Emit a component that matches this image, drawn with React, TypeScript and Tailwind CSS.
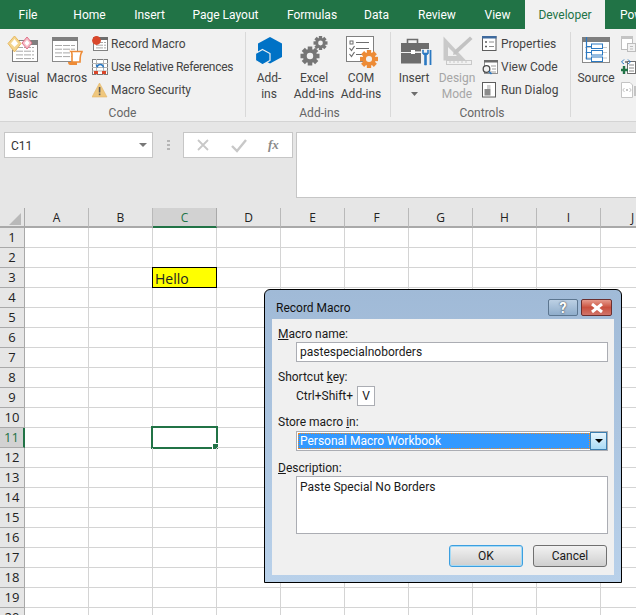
import type { ReactNode } from 'react'

const TABS = [
  { label: 'File', cls: 'w-[56px] justify-center' },
  { label: 'Home', cls: 'w-[67px] justify-center' },
  { label: 'Insert', cls: 'w-[53px] justify-center' },
  { label: 'Page Layout', cls: 'w-[99px] justify-center' },
  { label: 'Formulas', cls: 'w-[74px] justify-center' },
  { label: 'Data', cls: 'w-[55px] justify-center' },
  { label: 'Review', cls: 'w-[66px] justify-center' },
  { label: 'View', cls: 'w-[55px] justify-center' },
  { label: 'Developer', cls: 'w-[80px] justify-center bg-[#f1f1f1] text-[#217346]' },
  { label: 'Power', cls: 'w-[31px] pl-[15px]' }
]

const COLUMNS = ['A', 'B', 'C', 'D', 'E', 'F', 'G', 'H', 'I', 'J']
const ROWS = Array.from({ length: 20 }, (_, i) => i + 1)

function Gear({ cx, cy, r, color, bg = '#f1f1f1' }: { cx: number; cy: number; r: number; color: string; bg?: string }) {
  const teeth = [0, 45, 90, 135, 180, 225, 270, 315]
  const w = r * 0.48
  return (
    <g>
      {teeth.map(a => (
        <rect
          key={a}
          x={cx - w / 2}
          y={cy - r}
          width={w}
          height={r}
          fill={color}
          transform={`rotate(${a} ${cx} ${cy})`}
        />
      ))}
      <circle cx={cx} cy={cy} r={r * 0.74} fill={color} />
      <circle cx={cx} cy={cy} r={r * 0.34} fill={bg} />
    </g>
  )
}

function TableLines({ x, y, w, rows, step }: { x: number; y: number; w: number; rows: number; step: number }) {
  return (
    <g stroke="#a8a8a8" strokeWidth="1">
      {Array.from({ length: rows }, (_, i) => (
        <line key={i} x1={x} x2={x + w} y1={y + i * step} y2={y + i * step} strokeDasharray="7 1" />
      ))}
    </g>
  )
}

function VisualBasicIcon() {
  return (
    <svg width="40" height="38" viewBox="3 32 40 38">
      <rect x="12.5" y="40.5" width="25" height="21" fill="#fff" stroke="#7f7f7f" />
      <rect x="30" y="40" width="8" height="5" fill="#7f7f7f" />
      <TableLines x={16} y={47.5} w={18} rows={4} step={3.7} />
      <path d="M14.5 36 L21 43.5 L14.5 52 L8 43.5 Z" fill="#f4d58f" stroke="#e7b85f" />
      <path d="M14.5 39 L18 43.5 L14.5 47 L11 43.5 Z" fill="#fff" />
      <path d="M27 37 L32 43 L27 49 L22 43 Z" fill="#f6bcc6" stroke="#e0728a" />
      <path d="M27 40 L29.5 43 L27 46 L24.5 43 Z" fill="#fff" />
    </svg>
  )
}

function MacrosIcon() {
  return (
    <svg width="40" height="38" viewBox="47 32 40 38">
      <rect x="52.5" y="37.5" width="25" height="24" fill="#fff" stroke="#8a8a8a" />
      <rect x="52" y="37" width="26" height="4" fill="#7f7f7f" />
      <TableLines x={55} y={45.5} w={20} rows={4} step={3.7} />
      <path d="M71 51.5 H82 V52 C80 54 80 58 80 62 H72 V54 C72 53 71.5 52 71 51.5 Z" fill="#fff" stroke="#ed8b36" strokeWidth="1.6" />
      <path d="M68 62 H77 V65 H70 C69 65 68 64 68 62 Z" fill="#ed8b36" />
    </svg>
  )
}

function RecordIcon() {
  return (
    <svg width="16" height="16" viewBox="92 35 16 16">
      <rect x="93.5" y="36.5" width="14" height="13" fill="#fff" stroke="#808080" />
      <rect x="99" y="36" width="9" height="3" fill="#6d6d6d" />
      <TableLines x={96} y={41.5} w={10} rows={3} step={2.7} />
      <circle cx="96.5" cy="39.5" r="4.4" fill="#d9472b" />
    </svg>
  )
}

function RelativeIcon() {
  return (
    <svg width="16" height="16" viewBox="92 58 16 16">
      <rect x="92.5" y="58.5" width="15" height="15" fill="#fff" stroke="#7b7b7b" />
      <path d="M92 62.5 H108 M92 66.5 H108 M92 70 H108 M96.5 58 V74 M103.5 58 V74" stroke="#b5b5b5" />
      <path d="M97 66 C98 62.5 103 62.5 103.5 66.5" fill="none" stroke="#2d79c2" strokeWidth="1.4" />
      <path d="M95.5 63.5 L99 64 L97 67 Z" fill="#2d79c2" />
      <rect x="94" y="70" width="4" height="3" fill="#d9472b" />
      <rect x="102" y="70" width="4" height="3" fill="#d9472b" />
    </svg>
  )
}

function WarningIcon() {
  return (
    <svg width="16" height="16" viewBox="92 81 16 16">
      <path d="M99.5 82 L107 96 H92 Z" fill="#efc77d" stroke="#e4b768" strokeWidth="0.6" />
      <rect x="98.8" y="86" width="1.6" height="5.5" fill="#5b5b5b" />
      <rect x="98.8" y="92.5" width="1.6" height="1.7" fill="#5b5b5b" />
    </svg>
  )
}

function AddInsIcon() {
  return (
    <svg width="40" height="38" viewBox="250 32 40 38">
      <path d="M271 37 L283 43.5 L283 57 L271 63.5 L259 57 L259 43.5 Z" fill="#0072c6" />
      <path d="M263.5 49.5 L271 53.5 L271 60.5 L263.5 64.8 L256.5 60.5 L256.5 53.5 Z" fill="#0072c6" stroke="#f1f1f1" strokeWidth="1.2" />
    </svg>
  )
}

function ExcelAddInsIcon() {
  return (
    <svg width="50" height="38" viewBox="290 32 50 38">
      <Gear cx={311} cy={56} r={9.5} color="#767676" />
      <Gear cx={321.5} cy={43} r={7} color="#767676" />
    </svg>
  )
}

function ComAddInsIcon() {
  return (
    <svg width="44" height="38" viewBox="340 32 44 38">
      <rect x="347.5" y="36.5" width="27" height="25" fill="#fff" stroke="#808080" />
      <rect x="351" y="41" width="3" height="3" fill="none" stroke="#6d6d6d" />
      <path d="M357 42.5 H370 M357 48.5 H370 M357 54.5 H365" stroke="#6d6d6d" />
      <path d="M350.5 48 L352.5 50.5 L355.5 46 M350.5 54 L352.5 56.5 L355.5 52" fill="none" stroke="#6d6d6d" strokeWidth="1.2" />
      <Gear cx={370} cy={59} r={9} color="#ed8b36" />
    </svg>
  )
}

function InsertIcon() {
  return (
    <svg width="40" height="38" viewBox="395 32 40 38">
      <path d="M408.5 43 V39.5 H418.5 V43" fill="none" stroke="#6d6d6d" strokeWidth="1.6" />
      <rect x="402" y="43" width="28" height="9" fill="#6d6d6d" />
      <rect x="402" y="53" width="28" height="10.5" fill="#6d6d6d" />
      <rect x="412" y="50" width="4" height="4" fill="#fff" />
      <path d="M416 52 H424" stroke="#f1f1f1" strokeWidth="1.2" />
      <rect x="422" y="49" width="12" height="17" fill="#f1f1f1" />
      <path d="M423.5 50 V53.5 L425.5 55.5 V65 H427.5 V55.5 L429.5 53.5 V50 L428.5 50 V53 H424.5 V50 Z" fill="#2b79c2" stroke="#2b79c2" strokeWidth="0.6" />
      <path d="M431.5 50 V65" stroke="#2b79c2" strokeWidth="1.8" />
    </svg>
  )
}

function DesignModeIcon() {
  return (
    <svg width="44" height="38" viewBox="436 32 44 38">
      <path d="M444.5 36.5 V60.5 H467 Z M449 47 V56 H458 Z" fill="#c9c9c9" fillRule="evenodd" />
      <path d="M455 51 L471 36.5 L473.5 39 L457.5 54 L454 55 Z" fill="#c2c2c2" />
      <rect x="447.5" y="60.5" width="25" height="4" fill="#f1f1f1" stroke="#c9c9c9" />
      <path d="M451 61 V63 M455 61 V63 M459 61 V63 M463 61 V63 M467 61 V63" stroke="#c9c9c9" />
    </svg>
  )
}

function PropertiesIcon() {
  return (
    <svg width="16" height="16" viewBox="483 35 16 16">
      <rect x="483.5" y="35.5" width="13.5" height="14" fill="#fff" stroke="#5d5d5d" />
      <rect x="483" y="35" width="14.5" height="2.5" fill="#3e6a9e" />
      <path d="M486 41 H488 M486 45.5 H488" stroke="#5d5d5d" strokeWidth="1.5" />
      <path d="M490 41 H495 M490 45.5 H495" stroke="#8d8d8d" />
    </svg>
  )
}

function ViewCodeIcon() {
  return (
    <svg width="16" height="16" viewBox="482 58 16 16">
      <rect x="484.5" y="59.5" width="13" height="13" fill="#fff" stroke="#909090" />
      <rect x="484" y="59" width="14" height="2.5" fill="#6d6d6d" />
      <path d="M491 65 H496 M492 68 H496 M490 71 H496" stroke="#9d9d9d" />
      <circle cx="486.5" cy="68" r="3.3" fill="#f1f1f1" stroke="#4a4a4a" strokeWidth="1.3" />
      <path d="M489 70.5 L491.5 73" stroke="#2b79c2" strokeWidth="1.6" />
    </svg>
  )
}

function RunDialogIcon() {
  return (
    <svg width="16" height="16" viewBox="483 81 16 16">
      <rect x="483.5" y="81.5" width="13" height="14.5" fill="#fff" stroke="#5d5d5d" />
      <rect x="485.5" y="88" width="6" height="6.5" fill="#8c8c8c" />
      <rect x="488" y="84" width="3.5" height="4" fill="#cfcfcf" />
    </svg>
  )
}

function SourceIcon() {
  return (
    <svg width="44" height="38" viewBox="574 32 44 38">
      <rect x="582.5" y="37.5" width="27" height="25" fill="#fff" stroke="#8a8a8a" />
      <rect x="582" y="37" width="28" height="5" fill="#7f7f7f" />
      <path d="M585 47.5 H607 M585 52.5 H607 M585 58 H607" stroke="#c9c9c9" />
      <path d="M586.5 37 V59.5 M586.5 46.5 H591 M586.5 52.5 H591 M586.5 59 H591" fill="none" stroke="#2b79c2" strokeWidth="1.2" />
      <rect x="591.5" y="44" width="11" height="4.5" fill="#fff" stroke="#2b79c2" />
      <rect x="591.5" y="50.5" width="11" height="4.5" fill="#fff" stroke="#2b79c2" />
      <rect x="591.5" y="57" width="11" height="4.5" fill="#fff" stroke="#2b79c2" />
    </svg>
  )
}

function XmlMapIcon() {
  return (
    <svg width="15" height="16" viewBox="621 35 15 16">
      <rect x="621.5" y="35.5" width="11" height="13" fill="#fff" stroke="#bdbdbd" />
      <rect x="621" y="35" width="12" height="3" fill="#c4c4c4" />
      <rect x="627.5" y="42.5" width="8" height="8" fill="#f1f1f1" stroke="#bdbdbd" />
      <path d="M630 45.5 H633 M630 48 H633" stroke="#bdbdbd" />
    </svg>
  )
}

function XmlImportIcon() {
  return (
    <svg width="15" height="16" viewBox="621 59 15 16">
      <rect x="627.5" y="61.5" width="8" height="12" fill="#fff" stroke="#6d6d6d" />
      <path d="M629 65 H634 M629 68 H634 M629 71 H634" stroke="#8a8a8a" />
      <path d="M624 59.5 L621.5 62 L624 64 M628 59.5 L630.5 62 L628 64" fill="none" stroke="#2b79c2" />
      <circle cx="626" cy="62" r="1" fill="#6d6d6d" />
      <path d="M624 66 V74 M620 70 H628" stroke="#217346" strokeWidth="2.4" />
    </svg>
  )
}

function XmlExportIcon() {
  return (
    <svg width="15" height="16" viewBox="621 82 15 16">
      <path d="M621.5 82.5 H630 L632.5 85 V97.5 H621.5 Z" fill="#fff" stroke="#c4c4c4" />
      <path d="M624.5 88 L622.8 90 L624.5 92 M629.5 88 L631.2 90 L629.5 92" fill="none" stroke="#c4c4c4" />
      <rect x="626" y="89" width="2" height="2" fill="#c4c4c4" />
      <rect x="634" y="86" width="2" height="10" fill="#c4c4c4" />
    </svg>
  )
}

function BigButton({ icon, lines, cls, disabled }: { icon: ReactNode; lines: string[]; cls: string; disabled?: boolean }) {
  return (
    <div className={`flex shrink-0 flex-col items-center ${cls} ${disabled ? 'text-[#a6a6a6]' : ''}`}>
      <div className="flex h-[38px] justify-center">{icon}</div>
      {lines.map(line => (
        <div key={line} className="h-[16px] whitespace-nowrap text-center leading-[16px]">
          {line}
        </div>
      ))}
    </div>
  )
}

function SmallItem({ icon, label, cls }: { icon: ReactNode; label: string; cls: string }) {
  return (
    <div className="flex h-[23px] items-center whitespace-nowrap">
      <span className="flex w-[16px] items-center">{icon}</span>
      <span className={cls}>{label}</span>
    </div>
  )
}

function RibbonGroup({ label, cls, children }: { label: string; cls: string; children: ReactNode }) {
  return (
    <div className={`relative flex shrink-0 flex-col ${cls}`}>
      <div className="flex h-[73px] shrink-0 items-start">{children}</div>
      <div className="h-[16px] shrink-0 text-center leading-[16px] text-[#666]">{label}</div>
    </div>
  )
}

function Ribbon() {
  return (
    <div className="flex h-[93px] overflow-hidden border-b border-[#d4d4d4] bg-[#f1f1f1] pt-[3px] text-[12px] text-[#444]">
      <RibbonGroup label="Code" cls="h-[85px] w-[246px] border-r border-[#d9d9d9] pl-[3px] pr-[3px]">
        <BigButton icon={<VisualBasicIcon />} lines={['Visual', 'Basic']} cls="w-[40px]" />
        <BigButton icon={<MacrosIcon />} lines={['Macros']} cls="ml-[4px] w-[40px]" />
        <div className="ml-[5px] flex flex-col">
          <SmallItem icon={<RecordIcon />} label="Record Macro" cls="ml-[3px]" />
          <SmallItem icon={<RelativeIcon />} label="Use Relative References" cls="ml-[3px] tracking-[-0.27px]" />
          <SmallItem icon={<WarningIcon />} label="Macro Security" cls="ml-[3px]" />
        </div>
      </RibbonGroup>
      <RibbonGroup label="Add-ins" cls="h-[85px] w-[145px] border-r border-[#d9d9d9] pl-[3px]">
        <BigButton icon={<AddInsIcon />} lines={['Add-', 'ins']} cls="w-[40px]" />
        <BigButton icon={<ExcelAddInsIcon />} lines={['Excel', 'Add-ins']} cls="w-[50px]" />
        <BigButton icon={<ComAddInsIcon />} lines={['COM', 'Add-ins']} cls="w-[44px]" />
      </RibbonGroup>
      <RibbonGroup label="Controls" cls="h-[85px] w-[180px] border-r border-[#d9d9d9] pl-[3px]">
        <div>
          <BigButton icon={<InsertIcon />} lines={['Insert']} cls="w-[40px]" />
          <svg width="7" height="4" viewBox="0 0 7 4" className="ml-[17px] mt-[6px]">
            <path d="M0 0 H7 L3.5 4 Z" fill="#6d6d6d" />
          </svg>
        </div>
        <BigButton icon={<DesignModeIcon />} lines={['Design', 'Mode']} cls="ml-[1px] w-[44px]" disabled />
        <div className="ml-[3px] flex flex-col">
          <SmallItem icon={<PropertiesIcon />} label="Properties" cls="ml-[3px]" />
          <SmallItem icon={<ViewCodeIcon />} label="View Code" cls="ml-[3px]" />
          <SmallItem icon={<RunDialogIcon />} label="Run Dialog" cls="ml-[3px]" />
        </div>
      </RibbonGroup>
      <RibbonGroup label="" cls="h-[85px] w-[65px] pl-[3px]">
        <BigButton icon={<SourceIcon />} lines={['Source']} cls="w-[44px]" />
        <div className="ml-[3px] flex flex-col">
          <div className="flex h-[23px] items-center"><XmlMapIcon /></div>
          <div className="flex h-[23px] items-center"><XmlImportIcon /></div>
          <div className="flex h-[23px] items-center"><XmlExportIcon /></div>
        </div>
      </RibbonGroup>
    </div>
  )
}

function FormulaBar() {
  return (
    <div className="flex h-[86px] items-start bg-[#e6e6e6] pl-[4px] pt-[10px]">
      <div className="flex h-[26px] w-[149px] items-center justify-between border border-[#c6c6c6] bg-white pl-[6px] pr-[5px] text-[12px] text-[#333]">
        <span className="pt-[1px]">C11</span>
        <svg width="8" height="4" viewBox="0 0 8 4">
          <path d="M0 0 H8 L4 4 Z" fill="#777" />
        </svg>
      </div>
      <div className="ml-[14px] mt-[8px] flex w-[3px] flex-col gap-[2px]">
        <span className="h-[2px] w-[3px] bg-[#b5b5b5]" />
        <span className="h-[2px] w-[3px] bg-[#b5b5b5]" />
        <span className="h-[2px] w-[3px] bg-[#b5b5b5]" />
      </div>
      <div className="ml-[13px] flex h-[26px] w-[110px] items-center border border-[#c6c6c6] bg-white">
        <svg width="84" height="24" viewBox="0 0 84 24">
          <path d="M14 7 L24 17 M24 7 L14 17" stroke="#c8c8c8" strokeWidth="1.8" />
          <path d="M48 13 L53 18 L62 7" fill="none" stroke="#c8c8c8" strokeWidth="2.4" />
        </svg>
        <span className="font-['Liberation_Serif',serif] text-[13px] font-bold italic text-[#8a8a8a]">fx</span>
      </div>
      <div className="ml-[3px] h-[66px] flex-1 border border-r-0 border-[#c6c6c6] bg-white" />
    </div>
  )
}

function Sheet() {
  return (
    <div className="grid auto-rows-[20px] grid-cols-[25px_repeat(10,64px)] bg-white font-['Open_Sans',sans-serif] text-[12px] text-[#222]">
      <div className="relative border-b-2 border-r border-[#a9a9a9] bg-[#e6e6e6]">
        <div className="absolute bottom-[1px] right-[3px] h-0 w-0 border-b-[12px] border-l-[12px] border-b-[#b9b9b9] border-l-transparent" />
      </div>
      {COLUMNS.map(col =>
        col === 'C' ? (
          <div key={col} className="flex items-center justify-center border-b-2 border-r border-b-[#217346] border-r-[#a9a9a9] bg-[#d2d2d2] pt-[1px] text-[#217346]">
            {col}
          </div>
        ) : (
          <div key={col} className="flex items-center justify-center border-b-2 border-r border-b-[#a9a9a9] border-r-[#b9b9b9] bg-[#e6e6e6] pt-[1px]">
            {col}
          </div>
        )
      )}
      {ROWS.map(row => (
        <SheetRow key={row} row={row} />
      ))}
    </div>
  )
}

function SheetRow({ row }: { row: number }) {
  const selected = row === 11
  return (
    <>
      {selected ? (
        <div className="flex items-center justify-center border-b border-r-2 border-b-[#a9a9a9] border-r-[#217346] bg-[#d2d2d2] pt-[1px] text-[13px] text-[#217346]">
          {row}
        </div>
      ) : (
        <div className="flex items-center justify-center border-b border-r border-[#a9a9a9] bg-[#e6e6e6] pt-[1px] text-[13px]">
          {row}
        </div>
      )}
      {COLUMNS.map(col => (
        <div key={col} className="relative border-b border-r border-[#d4d4d4]">
          {col === 'C' && row === 3 && (
            <div className="absolute -left-[1px] -top-[1px] flex h-[21px] w-[65px] items-center border border-black bg-[#ffff00] pl-[2px] pt-[1px] text-[14px] text-[#222]">
              Hello
            </div>
          )}
          {col === 'C' && row === 11 && (
            <>
              <div className="absolute -left-[2px] -top-[2px] h-[23px] w-[67px] border-2 border-[#217346]" />
              <div className="absolute -bottom-[3px] -right-[3px] h-[7px] w-[7px] border border-white bg-[#217346]" />
            </>
          )}
        </div>
      ))}
    </>
  )
}

function Field({ cls, children }: { cls: string; children?: ReactNode }) {
  return <div className={`flex border border-[#abadb3] bg-white pl-[3px] ${cls}`}>{children}</div>
}

function RecordMacroDialog() {
  return (
    <div className="absolute left-[264px] top-[289px] flex h-[294px] w-[358px] flex-col rounded-t-[6px] border border-black bg-gradient-to-b from-[#a0bad7] to-[#b9d1ea] px-[7px] pb-[7px] font-['Roboto',sans-serif] text-[12px] text-[#1a1a1a]">
      <div className="flex h-[29px] shrink-0 items-start justify-between pt-[9px]">
        <span className="pl-[4px] pt-[1px] leading-[17px] text-[#111]">Record Macro</span>
        <div className="flex gap-[3px] pr-[2px]">
          <div className="flex h-[17px] w-[30px] items-center justify-center rounded-[2px] border border-[#5c7690] bg-gradient-to-b from-[#bcd0e4] to-[#8fadcb] text-[14px] font-bold leading-none text-white [text-shadow:0_0_2px_#222]">
            ?
          </div>
          <div className="flex h-[17px] w-[31px] items-center justify-center rounded-[2px] border border-[#6b2f2f] bg-gradient-to-b from-[#e59a8c] via-[#c9503e] to-[#d0746a]">
            <svg width="14" height="10" viewBox="0 0 14 10">
              <path d="M2 1 L12 9 M12 1 L2 9" stroke="#fff" strokeWidth="3" />
            </svg>
          </div>
        </div>
      </div>
      <div className="flex flex-1 flex-col bg-[#f0f0f0] pl-[6px] pr-[6px] pt-[6px]">
        <div className="h-[17px] pt-[1px] leading-[17px]"><u>M</u>acro name:</div>
        <Field cls="ml-[18px] h-[20px] items-center">pastespecialnoborders</Field>
        <div className="mt-[6px] h-[17px] pt-[1px] leading-[17px]">Shortcut <u>k</u>ey:</div>
        <div className="ml-[18px] mt-[1px] flex h-[20px] items-center">
          <span className="w-[61px] whitespace-nowrap">Ctrl+Shift+</span>
          <div className="flex h-[20px] w-[18px] items-center justify-center border border-[#abadb3] bg-white">V</div>
        </div>
        <div className="mt-[7px] h-[17px] pt-[1px] leading-[17px]">Store macro <u>i</u>n:</div>
        <div className="ml-[18px] mt-[1px] flex h-[20px] border border-[#abadb3] bg-white">
          <div className="my-[1px] ml-[1px] flex flex-1 items-center border border-dotted border-[#f08a24] bg-[#3399ff] pl-[1px] text-white">
            Personal Macro Workbook
          </div>
          <div className="flex w-[17px] items-center justify-center border border-[#3c7fb1] bg-gradient-to-b from-[#e6f4fc] to-[#a9dbf6]">
            <svg width="8" height="4" viewBox="0 0 8 4">
              <path d="M0 0 H8 L4 4 Z" fill="#000" />
            </svg>
          </div>
        </div>
        <div className="mt-[8px] h-[17px] pt-[1px] leading-[17px]"><u>D</u>escription:</div>
        <Field cls="ml-[18px] h-[58px] items-start pt-[1px]">Paste Special No Borders</Field>
        <div className="ml-[171px] mt-[11px] flex gap-[10px]">
          <div className="flex h-[22px] w-[74px] items-center justify-center rounded-[3px] border border-[#3c9fe0] bg-gradient-to-b from-[#f2f2f2] to-[#cfcfcf] shadow-[inset_0_0_0_1px_#a5daf5]">OK</div>
          <div className="flex h-[22px] w-[74px] items-center justify-center rounded-[3px] border border-[#707070] bg-gradient-to-b from-[#f2f2f2] to-[#cfcfcf]">Cancel</div>
        </div>
      </div>
    </div>
  )
}

export default function App() {
  return (
    <div className="relative h-[615px] w-[636px] overflow-hidden bg-white font-['Roboto',sans-serif]">
      <div className="flex h-[29px] overflow-hidden bg-[#217346] text-[12px] text-white">
        {TABS.map(tab => (
          <div key={tab.label} className={`flex shrink-0 items-center overflow-hidden ${tab.cls}`}>
            {tab.label}
          </div>
        ))}
      </div>
      <Ribbon />
      <FormulaBar />
      <Sheet />
      <RecordMacroDialog />
    </div>
  )
}
